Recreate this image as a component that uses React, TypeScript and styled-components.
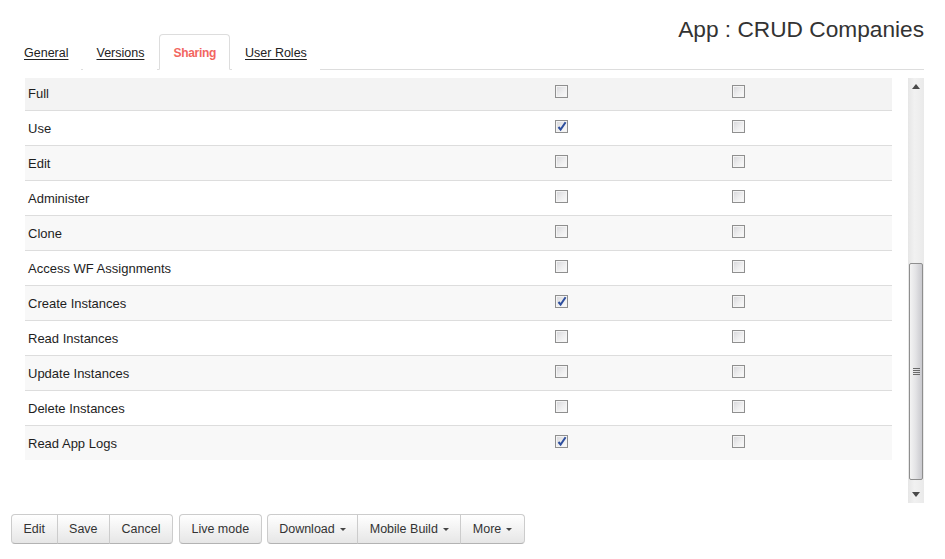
import React from 'react';
import styled, { createGlobalStyle } from 'styled-components';

const GlobalStyle = createGlobalStyle`
  html, body {
    margin: 0;
    padding: 0;
    background: #fff;
  }
  body {
    font-family: 'Liberation Sans', Arial, sans-serif;
    font-size: 13px;
    color: #222;
  }
`;

const Page = styled.div`
  width: 945px;
  height: 559px;
  box-sizing: border-box;
  padding: 0 21px 0 11px;
  overflow: hidden;
`;

const Header = styled.div`
  display: flex;
  justify-content: space-between;
  height: 69px;
  border-bottom: 1px solid #ddd;
`;

const TabList = styled.ul`
  display: flex;
  align-self: flex-end;
  list-style: none;
  margin: 0 0 -1px 0;
  padding: 0;
`;

const Tab = styled.li<{ $active?: boolean }>`
  margin-right: 2px;
  padding: 2px ${({ $active }) => ($active ? '13px' : '12px')} 0;
  line-height: 32px;
  font-size: ${({ $active }) => ($active ? '12px' : '12.5px')};
  letter-spacing: ${({ $active }) => ($active ? '-0.3px' : '0')};
  border: 1px solid ${({ $active }) => ($active ? '#ddd' : 'transparent')};
  border-bottom-color: ${({ $active }) => ($active ? '#fff' : 'transparent')};
  border-radius: 4px 4px 0 0;
  background: #fff;
  color: ${({ $active }) => ($active ? '#f2665f' : '#222')};
  font-weight: ${({ $active }) => ($active ? 'bold' : 'normal')};
  text-decoration: ${({ $active }) => ($active ? 'none' : 'underline')};
  text-underline-offset: 2px;
  cursor: pointer;
`;

const Title = styled.h1`
  margin: 15px 0 0;
  font-size: 22.7px;
  line-height: 28px;
  font-weight: normal;
  color: #333;
`;

const Content = styled.div`
  display: flex;
  justify-content: space-between;
  height: 425px;
  margin-top: 8px;
  padding-left: 14px;
`;

const Table = styled.div`
  width: 867px;
  overflow: hidden;
`;

const Row = styled.div<{ $shade: string; $clipped?: boolean; $last?: boolean }>`
  display: grid;
  grid-template-columns: 530px 177px 1fr;
  align-items: center;
  height: 34px;
  margin-top: ${({ $clipped }) => ($clipped ? '-2px' : '0')};
  background: ${({ $shade }) => $shade};
  border-bottom: ${({ $last }) => ($last ? 'none' : '1px solid #ddd')};
`;

const Label = styled.span`
  padding-left: 3px;
  color: #1e1e1e;
`;

const Box = styled.span`
  display: flex;
  width: 13px;
  height: 13px;
  margin-top: -4px;
  box-sizing: border-box;
  border: 1px solid #8f8f8f;
  background: linear-gradient(135deg, #d6d6da 0%, #eeeeef 55%, #fbfbfb 100%);
  box-shadow: inset 0 0 0 1px #f4f4f4;
  position: relative;

  svg {
    position: absolute;
    left: 1px;
    top: 0px;
  }
`;

const Scrollbar = styled.div`
  display: flex;
  flex-direction: column;
  width: 16px;
  background: linear-gradient(90deg, #e6e6e6, #f1f1f1 40%, #eaeaea);
`;

const Arrow = styled.div`
  display: flex;
  align-items: center;
  justify-content: center;
  height: 17px;
`;

const Track = styled.div`
  flex: 1;
  display: flex;
  flex-direction: column;
  justify-content: flex-end;
  padding-bottom: 6px;
`;

const Thumb = styled.div`
  display: flex;
  align-items: center;
  justify-content: center;
  height: 215px;
  margin: 0 1px 0 1px;
  border: 1px solid #8e8e8e;
  border-radius: 2px;
  background: linear-gradient(90deg, #f3f3f3 0%, #e4e4e6 45%, #c9c9ce 100%);
`;

const Grip = styled.div`
  display: flex;
  flex-direction: column;
  gap: 1px;

  span {
    display: block;
    width: 7px;
    height: 1px;
    background: #6a6a6a;
  }
`;

const Toolbar = styled.div`
  display: flex;
  gap: 5px;
  margin-top: 11px;
`;

const ButtonGroup = styled.div<{ $wide?: boolean }>`
  display: flex;
  margin-right: ${({ $wide }) => ($wide ? '1px' : '0')};
`;

const Button = styled.button`
  display: flex;
  align-items: center;
  gap: 5px;
  height: 30px;
  padding: 0 11.5px;
  font-family: 'Liberation Sans', Arial, sans-serif;
  font-size: 12.5px;
  color: #333;
  background: linear-gradient(#ffffff, #e6e6e6);
  border: 1px solid #ccc;
  border-bottom-color: #b3b3b3;
  border-radius: 0;
  box-shadow: inset 0 1px 0 rgba(255, 255, 255, 0.2);
  cursor: pointer;

  & + & {
    margin-left: -1px;
  }
  &:first-child {
    border-radius: 4px 0 0 4px;
  }
  &:last-child {
    border-radius: 0 4px 4px 0;
  }
  &:only-child {
    border-radius: 4px;
  }
`;

const Caret = styled.span`
  width: 0;
  height: 0;
  border-left: 3px solid transparent;
  border-right: 3px solid transparent;
  border-top: 3px solid #444;
  margin-top: 1px;
`;

const rows: { label: string; first: boolean; second: boolean }[] = [
  { label: 'Full', first: false, second: false },
  { label: 'Use', first: true, second: false },
  { label: 'Edit', first: false, second: false },
  { label: 'Administer', first: false, second: false },
  { label: 'Clone', first: false, second: false },
  { label: 'Access WF Assignments', first: false, second: false },
  { label: 'Create Instances', first: true, second: false },
  { label: 'Read Instances', first: false, second: false },
  { label: 'Update Instances', first: false, second: false },
  { label: 'Delete Instances', first: false, second: false },
  { label: 'Read App Logs', first: true, second: false },
];

const Checkbox = ({ checked }: { checked: boolean }) => (
  <Box>
    {checked && (
      <svg width="10" height="11" viewBox="0 0 10 11">
        <path d="M1.5 6 L3.6 8.6 L8.6 1.2" fill="none" stroke="#2e4f9e" strokeWidth="2" />
      </svg>
    )}
  </Box>
);

export default function App() {
  const tabs = ['General', 'Versions', 'Sharing', 'User Roles'];

  return (
    <Page>
      <GlobalStyle />
      <Header>
        <TabList>
          {tabs.map((t) => (
            <Tab key={t} $active={t === 'Sharing'}>
              {t}
            </Tab>
          ))}
        </TabList>
        <Title>App : CRUD Companies</Title>
      </Header>

      <Content>
        <Table>
          {rows.map((r, i) => (
            <Row
              key={r.label}
              $clipped={i === 0}
              $last={i === rows.length - 1}
              $shade={i === 0 ? '#f3f3f3' : i % 2 === 0 ? '#f8f8f8' : '#fff'}
            >
              <Label>{r.label}</Label>
              <Checkbox checked={r.first} />
              <Checkbox checked={r.second} />
            </Row>
          ))}
        </Table>

        <Scrollbar>
          <Arrow>
            <svg width="8" height="5" viewBox="0 0 8 5">
              <path d="M0 5 L4 0 L8 5 Z" fill="#4a4a4a" />
            </svg>
          </Arrow>
          <Track>
            <Thumb>
              <Grip>
                <span />
                <span />
                <span />
                <span />
              </Grip>
            </Thumb>
          </Track>
          <Arrow>
            <svg width="8" height="5" viewBox="0 0 8 5">
              <path d="M0 0 L8 0 L4 5 Z" fill="#4a4a4a" />
            </svg>
          </Arrow>
        </Scrollbar>
      </Content>

      <Toolbar>
        <ButtonGroup $wide>
          <Button>Edit</Button>
          <Button>Save</Button>
          <Button>Cancel</Button>
        </ButtonGroup>
        <ButtonGroup>
          <Button>Live mode</Button>
        </ButtonGroup>
        <ButtonGroup>
          <Button>
            Download <Caret />
          </Button>
          <Button>
            Mobile Build <Caret />
          </Button>
          <Button>
            More <Caret />
          </Button>
        </ButtonGroup>
      </Toolbar>
    </Page>
  );
}
